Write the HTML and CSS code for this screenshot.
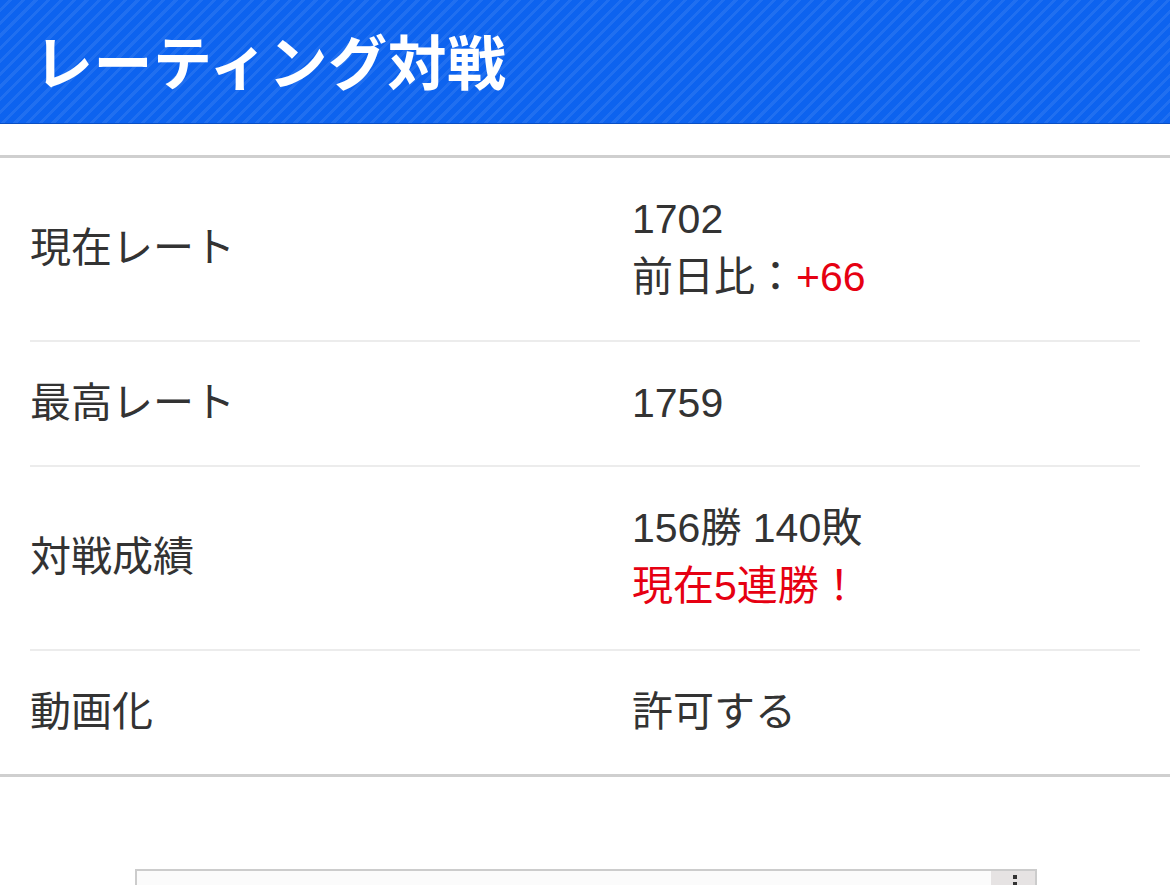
FILE: index.html
```html
<!DOCTYPE html>
<html lang="ja">
<head>
<meta charset="utf-8">
<title>レーティング対戦</title>
<link rel="stylesheet" href="styles.css">
</head>
<body>
<header class="hero">
  <h1 class="hero-title">レーティング対戦</h1>
</header>
<section class="stats">
  <div class="row">
    <div class="label">現在レート</div>
    <div class="value">
      <div>1702</div>
      <div>前日比：<span class="red">+66</span></div>
    </div>
  </div>
  <div class="row">
    <div class="label">最高レート</div>
    <div class="value"><div>1759</div></div>
  </div>
  <div class="row">
    <div class="label">対戦成績</div>
    <div class="value">
      <div>156勝 140敗</div>
      <div class="red">現在5連勝！</div>
    </div>
  </div>
  <div class="row">
    <div class="label">動画化</div>
    <div class="value"><div>許可する</div></div>
  </div>
</section>
<div class="embed">
  <div class="embed-box">
    <div class="embed-main"></div>
    <div class="embed-side"><span class="dot"></span><span class="dot"></span></div>
  </div>
</div>
</body>
</html>
```
FILE: styles.css
```css
html, body {
  margin: 0;
  padding: 0;
  background: #fff;
}
body {
  font-family: "Liberation Sans", "Noto Sans CJK JP", sans-serif;
  color: #333;
  width: 1170px;
  height: 885px;
  overflow: hidden;
}
.hero {
  height: 123px;
  background-color: #0d63ef;
  background-image: repeating-linear-gradient(135deg, rgba(255,255,255,0) 0px, rgba(255,255,255,0) 6px, rgba(255,255,255,0.08) 6px, rgba(255,255,255,0.08) 9px);
  border-bottom: 1px solid #0a50c4;
  display: flex;
  align-items: center;
  padding-left: 34px;
}
.hero-title {
  margin: 0;
  color: #fff;
  font-family: "Noto Sans CJK JP", sans-serif;
  font-weight: 700;
  font-size: 59px;
  line-height: 1;
  letter-spacing: 0.5px;
  position: relative;
  top: -2px;
}
.stats {
  margin-top: 31px;
  border-top: 3px solid #cfcfcf;
  border-bottom: 3px solid #cfcfcf;
  padding: 0 30px;
}
.row {
  display: grid;
  grid-template-columns: 602px 1fr;
  align-items: center;
  padding: 32px 0 33.5px;
  border-bottom: 2px solid #ececec;
  font-size: 41px;
  line-height: 58px;
}
.row:last-child {
  border-bottom: none;
}
.label, .value {
  font-family: "Liberation Sans", "Noto Sans CJK JP", sans-serif;
}
.red {
  color: #e60012;
}
.embed {
  padding-top: 92px;
  padding-left: 135px;
}
.embed-box {
  width: 898px;
  height: 14px;
  border: 2px solid #cccccc;
  border-bottom: none;
  display: flex;
  background: #f7f7f7;
  overflow: hidden;
}
.embed-main {
  flex: 1;
  background: #fbfbfb;
}
.embed-side {
  width: 44px;
  background: #e6e3e3;
  display: flex;
  flex-direction: column;
  align-items: center;
  gap: 3px;
  padding-top: 4px;
  padding-left: 4px;
  box-sizing: border-box;
}
.dot {
  display: block;
  width: 4px;
  height: 4px;
  background: #333;
  flex: none;
}
```
